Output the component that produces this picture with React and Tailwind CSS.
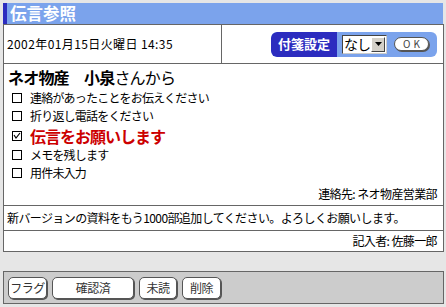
import React from "react";

const F = { fontFamily: '"Noto Sans CJK JP", "Noto Sans", sans-serif' };

function Box({ checked }) {
  return (
    <span className="relative inline-block w-[10px] h-[10px] border border-black bg-white shrink-0">
      {checked && (
        <svg className="absolute left-0 top-0" width="8" height="8" viewBox="0 0 8 8">
          <path d="M1 3 L3 6 L7 1" stroke="black" strokeWidth="1.2" fill="none" />
        </svg>
      )}
    </span>
  );
}

function Btn({ children, w }) {
  return (
    <div
      className={`${w} h-[22px] bg-white border border-[#555] rounded-[5px] shadow-[1px_1px_0_#555] flex items-center justify-center text-[12px] text-[#333] tracking-[-0.5px]`}
    >
      {children}
    </div>
  );
}

export default function App() {
  return (
    <div className="w-[446px] h-[307px] bg-[#e6e6e6] pt-[3px] px-[3px] overflow-hidden" style={F}>
      <div className="w-[440px] h-[21px] bg-[#7ba3ec] border-l-[4px] border-[#2c2cbf] flex items-center pl-[3px]">
        <span className="text-white font-bold text-[16.5px] leading-none tracking-[0px]">伝言参照</span>
      </div>
      <div className="w-[441px] border border-[#666] bg-white">
        <div className="flex h-[39px] border-b border-[#666]">
          <div className="w-[218px] border-r border-[#666] flex items-center pl-[3px] text-[12px] tracking-[0.4px] text-black">
            2002年01月15日火曜日 14:35
          </div>
          <div className="flex-1 flex items-center justify-end pr-[6px]">
            <div className="h-[25px] w-[166px] rounded-[6px] bg-[#7ba3ec] flex items-center overflow-hidden">
              <div className="h-full w-[66px] bg-[#2c2cbf] flex items-center justify-center text-white font-bold text-[13px] tracking-[0px] rounded-l-[6px]">
                付箋設定
              </div>
              <div className="ml-[5px] h-[19px] w-[45px] bg-white border border-[#444] border-r-[#ccc] border-b-[#ccc] flex items-center shrink-0">
                <span className="text-[14px] leading-[17px] pl-[1px] text-black tracking-[-1px] whitespace-nowrap shrink-0">なし</span>
                <span className="ml-auto mr-[1px] w-[14px] h-[15px] bg-[#d4d0c8] border border-[#fff] border-r-[#444] border-b-[#444] flex items-center justify-center shrink-0">
                  <svg width="7" height="4" viewBox="0 0 7 4"><path d="M0 0 H7 L3.5 4 Z" fill="black" /></svg>
                </span>
              </div>
              <div className="ml-[7px] w-[35px] h-[14px] bg-white border border-[#555] rounded-full shadow-[1px_1px_0_#555] flex items-center justify-center text-[10px] text-[#444] tracking-[3px] leading-[12px] pl-[3px] shrink-0">
                OK
              </div>
            </div>
          </div>
        </div>
        <div className="h-[142px] border-b border-[#666] pl-[4px] pr-[6px] pt-[2px] flex flex-col">
          <div className="text-[16px] leading-[22px] text-black tracking-[-0.8px]">
            <span className="font-bold">ネオ物産　小泉</span>さんから
          </div>
          <div className="flex flex-col pl-[4px] mt-[1px]">
            <div className="flex items-center gap-[8px] h-[18px] text-[12px] tracking-[-0.8px]"><Box />連絡があったことをお伝えください</div>
            <div className="flex items-center gap-[8px] h-[18px] text-[12px] tracking-[-0.8px]"><Box />折り返し電話をください</div>
            <div className="flex items-center gap-[8px] h-[21px] text-[16px] font-bold text-[#cc0000] tracking-[-1px]"><Box checked />伝言をお願いします</div>
            <div className="flex items-center gap-[8px] h-[18px] text-[12px] tracking-[-0.8px]"><Box />メモを残します</div>
            <div className="flex items-center gap-[8px] h-[18px] text-[12px] tracking-[-0.8px]"><Box />用件未入力</div>
          </div>
          <div className="mt-auto mb-[3px] text-right text-[12px] tracking-[-0.6px] leading-[16px]">連絡先: ネオ物産営業部</div>
        </div>
        <div className="h-[25px] border-b border-[#666] flex items-center pl-[3px] text-[12px] tracking-[-0.6px]">
          新バージョンの資料をもう1000部追加してください。よろしくお願いします。
        </div>
        <div className="h-[20px] flex items-center justify-end pr-[6px] text-[12px] tracking-[-0.6px]">
          記入者: 佐藤一郎
        </div>
      </div>
      <div className="mt-[19px] w-[441px] h-[33px] bg-[#cccccc] border border-[#666] flex items-center gap-[5px] pl-[4px]">
        <Btn w="w-[39px]">フラグ</Btn>
        <Btn w="w-[82px]">確認済</Btn>
        <Btn w="w-[38px]">未読</Btn>
        <Btn w="w-[39px]">削除</Btn>
      </div>
    </div>
  );
}
